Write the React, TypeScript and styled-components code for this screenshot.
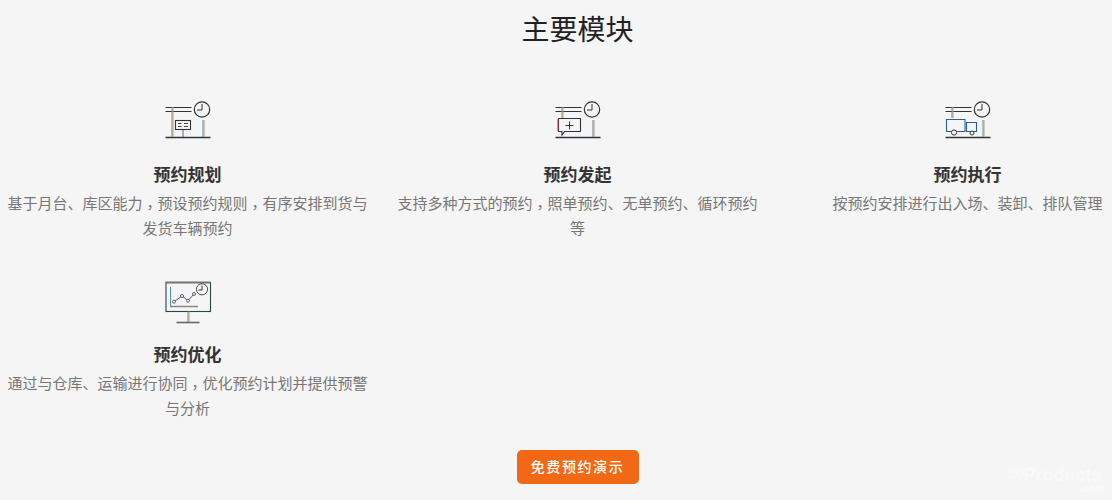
import { Fragment } from 'react';
import styled, { createGlobalStyle } from 'styled-components';

const GlobalStyle = createGlobalStyle`
  html, body {
    margin: 0;
    padding: 0;
    height: 500px;
    overflow: hidden;
    background: #f5f5f5;
  }
  body {
    font-family: "Liberation Sans", "Noto Sans CJK SC", sans-serif;
  }
`;

const Page = styled.section`
  position: relative;
  width: 1112px;
  height: 500px;
  overflow: hidden;
`;

const Title = styled.h2`
  width: 1155px;
  margin: 0;
  padding-top: 11px;
  font-size: 28px;
  line-height: 40px;
  font-weight: 400;
  color: #222;
  text-align: center;
`;

const Modules = styled.div`
  display: flex;
  flex-wrap: wrap;
  width: 1170px;
  margin: 50px 0 0 -7.5px;
`;

const Module = styled.article`
  box-sizing: border-box;
  width: 390px;
  height: 180px;
  padding: 0 15px;
  text-align: center;
`;

const IconWrap = styled.div`
  height: 43px;
  margin-bottom: 19px;

  svg {
    display: block;
    margin: 0 auto;
  }
`;

const Name = styled.h3`
  margin: 0;
  font-size: 17px;
  line-height: 26px;
  font-weight: 700;
  color: #333;
`;

// 1px of slack each side: 24 characters fill the 360px column exactly
const Desc = styled.p`
  margin: 2px -1px 0;
  font-size: 15px;
  line-height: 25px;
  color: #777;
`;

// the full-width comma sits in the middle of its cell in the reference
const Comma = styled.span`
  font-family: "Noto Sans CJK TC", sans-serif;
  line-height: 1;
  vertical-align: -4px;
`;

const Footer = styled.div`
  display: flex;
  justify-content: center;
  width: 1155px;
  margin-top: -11px;
`;

const DemoButton = styled.a`
  display: block;
  width: 122px;
  height: 34px;
  border-radius: 5px;
  background: #f16915;
  color: #fff;
  font-size: 14px;
  font-weight: 500;
  line-height: 34px;
  letter-spacing: 1.6px;
  text-align: center;
`;

const Watermark = styled.div`
  position: absolute;
  right: 4px;
  bottom: 6px;
  width: 100px;
  color: rgba(255, 255, 255, 0.45);
  font-weight: 700;
  line-height: 1;
  pointer-events: none;
`;

const WatermarkMain = styled.div`
  display: flex;
  align-items: flex-start;
  font-size: 18px;
  white-space: nowrap;
`;

const WatermarkNumber = styled.span`
  font-size: 14px;
  font-weight: 400;
`;

const WatermarkSub = styled.div`
  font-size: 10px;
  text-align: right;
  padding-right: 4px;
`;

const DARK = '#2f3439';
const BLUE = '#4a90c8';
const ORANGE = '#c99a55';

const Post = ({ x, y, length }: { x: number; y: number; length: number }) => (
  <>
    <path d={`M${x} ${y}v${length}`} stroke={BLUE} fill="none" />
    <path d={`M${x + 1} ${y}v${length}`} stroke={ORANGE} fill="none" />
  </>
);

// shared part of the first three icons: the awning lines, clock, post and ground
const Dock = ({ leftPost }: { leftPost: number }) => (
  <>
    <path d="M1.5 6.5h26M1.5 10.5h26" stroke={DARK} strokeWidth="1.2" fill="none" />
    <path d="M1.5 36.5h45" stroke={DARK} strokeWidth="1.3" fill="none" />
    <Post x={8} y={6} length={leftPost} />
    <circle cx="38" cy="8.5" r="7.7" stroke={DARK} strokeWidth="1.2" fill="none" />
    <path d="M38 3v6h-5" stroke={DARK} fill="none" />
    <Post x={39} y={19} length={17} />
  </>
);

const PlanIcon = () => (
  <svg width="48" height="40" viewBox="0 0 48 40">
    <Dock leftPost={30} />
    <rect x="11.5" y="19.5" width="15" height="9" stroke={DARK} strokeWidth="1.1" fill="#f5f5f5" />
    <path d="M14 22.5h3.5M20 22.5h4M14 25.5h3.5M20 25.5h4" stroke={DARK} strokeWidth="0.9" fill="none" />
    <path d="M19 29v7" stroke="#7a4a9a" fill="none" />
  </svg>
);

const InitiateIcon = () => (
  <svg width="48" height="40" viewBox="0 0 48 40">
    <Dock leftPost={11} />
    <path d="M4.5 17.5h22v13h-16l-2.5 3.5v-3.5h-3.5z" stroke={DARK} strokeWidth="1.1" fill="none" />
    <path d="M4 18v12" stroke="#c4287a" fill="none" />
    <path d="M15.5 20.5v8M11.5 24.5h8" stroke={DARK} fill="none" />
  </svg>
);

const ExecuteIcon = () => (
  <svg width="48" height="40" viewBox="0 0 48 40">
    <Dock leftPost={11} />
    <path d="M2.5 18.5h18.5v12h-18.5z" stroke="#2b5f91" strokeWidth="1.1" fill="none" />
    <path d="M22.5 21.5h10v9h-10z" stroke="#2b5f91" strokeWidth="1.1" fill="none" />
    <circle cx="10" cy="31.5" r="2.6" stroke={DARK} fill="#f5f5f5" />
    <circle cx="28" cy="32" r="2" stroke={DARK} fill="#f5f5f5" />
  </svg>
);

const OptimizeIcon = () => (
  <svg width="48" height="46" viewBox="0 0 48 46">
    <rect x="2" y="1.5" width="44.5" height="29" stroke="#2a4a39" strokeWidth="1.1" fill="none" />
    <path d="M1.5 1.5h45" stroke="#777" strokeWidth="2" fill="none" />
    <path d="M6.5 6v20" stroke={BLUE} fill="none" />
    <path d="M6 25.5h28" stroke="#888" strokeWidth="1.5" fill="none" />
    <path d="M10 20.7l8-5.7 6 4.7 6-6.7" stroke="#6b5a72" fill="none" />
    <circle cx="10" cy="20.7" r="1.5" stroke="#6b5a72" fill="#f5f5f5" />
    <circle cx="18" cy="15" r="1.5" stroke="#6b5a72" fill="#f5f5f5" />
    <circle cx="24" cy="19.7" r="1.5" stroke="#6b5a72" fill="#f5f5f5" />
    <circle cx="30" cy="13" r="1.5" stroke="#6b5a72" fill="#f5f5f5" />
    <circle cx="38" cy="8.3" r="5.6" stroke="#4a4a48" fill="none" />
    <path d="M38 4.5v4.5h-3.5" stroke={DARK} fill="none" />
    <Post x={24} y={30.5} length={11} />
    <path d="M12.5 41.5h23" stroke="#666" strokeWidth="1.6" fill="none" />
  </svg>
);

const modules = [
  { name: '预约规划', desc: '基于月台、库区能力，预设预约规则，有序安排到货与发货车辆预约', icon: <PlanIcon /> },
  { name: '预约发起', desc: '支持多种方式的预约，照单预约、无单预约、循环预约等', icon: <InitiateIcon /> },
  { name: '预约执行', desc: '按预约安排进行出入场、装卸、排队管理', icon: <ExecuteIcon /> },
  { name: '预约优化', desc: '通过与仓库、运输进行协同，优化预约计划并提供预警与分析', icon: <OptimizeIcon /> },
];

export default function App() {
  return (
    <Page>
      <GlobalStyle />
      <Title>主要模块</Title>
      <Modules>
        {modules.map((m) => (
          <Module key={m.name}>
            <IconWrap>{m.icon}</IconWrap>
            <Name>{m.name}</Name>
            <Desc>
              {m.desc.split('，').map((part, i) => (
                <Fragment key={part}>
                  {i > 0 && <Comma>，</Comma>}
                  {part}
                </Fragment>
              ))}
            </Desc>
          </Module>
        ))}
      </Modules>
      <Footer>
        <DemoButton>免费预约演示</DemoButton>
      </Footer>
      <Watermark>
        <WatermarkMain>
          <WatermarkNumber>56</WatermarkNumber>
          Products
        </WatermarkMain>
        <WatermarkSub>.com</WatermarkSub>
      </Watermark>
    </Page>
  );
}
